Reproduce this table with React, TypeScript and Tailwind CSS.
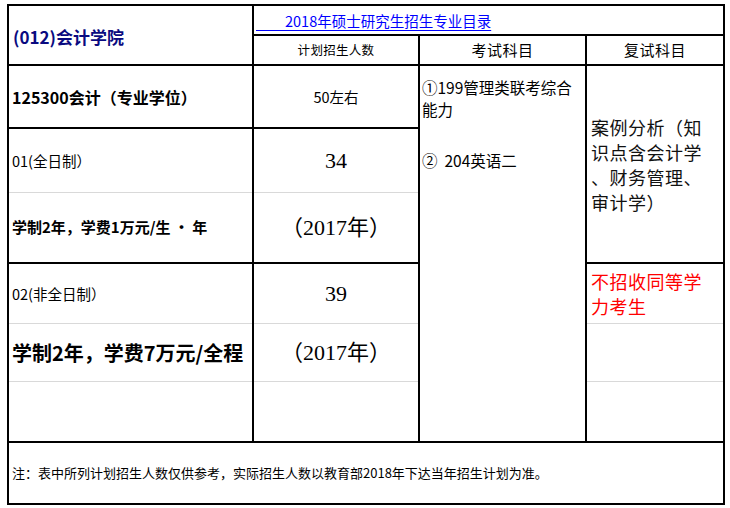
import React from 'react';

const cell = 'bg-white';
const grey = 'border-b border-[#d9d9d9]';
const serif = "[font-family:'Liberation_Serif','Noto_Sans_CJK_SC',serif]";

export default function App() {
  return (
    <div className="w-[730px] h-[508px] bg-white overflow-hidden pt-[4px] pl-[7px] [font-family:'Noto_Sans_CJK_SC',sans-serif] text-black">
      <div className="grid w-[718px] bg-black gap-[2px] p-[2px] grid-cols-[243px_164px_165px_136px] grid-rows-[28px_28px_61px_133px_177px_60px]">
        {/* header */}
        <div className={`${cell} row-span-2 flex items-center pl-[4px] pt-[4px] text-[17px] font-bold text-[#0a0a80]`}>
          (012)会计学院
        </div>
        <div className={`${cell} col-span-3 flex items-center pl-[2px] pt-[2px] text-[14.5px] leading-none`}>
          <span className="underline underline-offset-[3px] text-[#0000ff]">{'\u3000\u3000'}2018年硕士研究生招生专业目录</span>
        </div>
        <div className={`${cell} flex items-center justify-center text-[12.5px] tracking-[0.3px]`}>计划招生人数</div>
        <div className={`${cell} flex items-center justify-center text-[15px] tracking-[0.5px]`}>考试科目</div>
        <div className={`${cell} flex items-center justify-center text-[15px] tracking-[0.5px]`}>复试科目</div>

        {/* major */}
        <div className={`${cell} flex items-center pl-[3px] text-[16px] font-bold`}>125300会计（专业学位）</div>
        <div className={`${cell} flex items-center justify-center text-[14.5px]`}>50左右</div>
        <div className={`${cell} row-span-3 pl-[2px] pt-[10px] text-[15.5px] leading-[22px]`}>
          <div>①199管理类联考综合</div>
          <div>能力</div>
          <div className="mt-[29px]">②&nbsp;&nbsp;204英语二</div>
        </div>
        <div className={`${cell} row-span-2 flex items-center pl-[4px] pt-[2px] text-[18px] leading-[25px] tracking-[0.5px] text-[#111]`}>
          <div>
            案例分析（知
            <br />
            识点含会计学
            <br />
            、财务管理、
            <br />
            审计学）
          </div>
        </div>

        {/* full-time */}
        <div className={`${cell} flex flex-col`}>
          <div className={`h-[64px] ${grey} flex items-center pl-[3px] text-[14.5px]`}>01(全日制）</div>
          <div className="flex-1 flex items-center pl-[3px] text-[15px] font-bold">学制2年，学费1万元/生 · 年</div>
        </div>
        <div className={`${cell} flex flex-col`}>
          <div className={`h-[64px] ${grey} flex items-center justify-center text-[22px] ${serif}`}>34</div>
          <div className={`flex-1 flex items-center justify-center text-[22px] ${serif}`}>（2017年）</div>
        </div>

        {/* part-time */}
        <div className={`${cell} flex flex-col`}>
          <div className={`h-[60px] ${grey} flex items-center pl-[3px] text-[14.5px]`}>02(非全日制）</div>
          <div className={`h-[58px] ${grey} flex items-center pl-[3px] text-[20px] font-bold`}>学制2年，学费7万元/全程</div>
          <div className="flex-1" />
        </div>
        <div className={`${cell} flex flex-col`}>
          <div className={`h-[60px] ${grey} flex items-center justify-center text-[22px] ${serif}`}>39</div>
          <div className={`h-[58px] ${grey} flex items-center justify-center text-[22px] ${serif}`}>（2017年）</div>
          <div className="flex-1" />
        </div>
        <div className={`${cell} flex flex-col`}>
          <div className={`h-[60px] ${grey} pl-[4px] pt-[5px] text-[18px] leading-[25px] tracking-[0.5px] text-[#ff0000]`}>
            不招收同等学
            <br />
            力考生
          </div>
          <div className={`h-[58px] ${grey}`} />
          <div className="flex-1" />
        </div>

        {/* note */}
        <div className={`${cell} col-span-4 flex items-center pl-[3px] text-[13px]`}>
          注：表中所列计划招生人数仅供参考，实际招生人数以教育部2018年下达当年招生计划为准。
        </div>
      </div>
    </div>
  );
}
